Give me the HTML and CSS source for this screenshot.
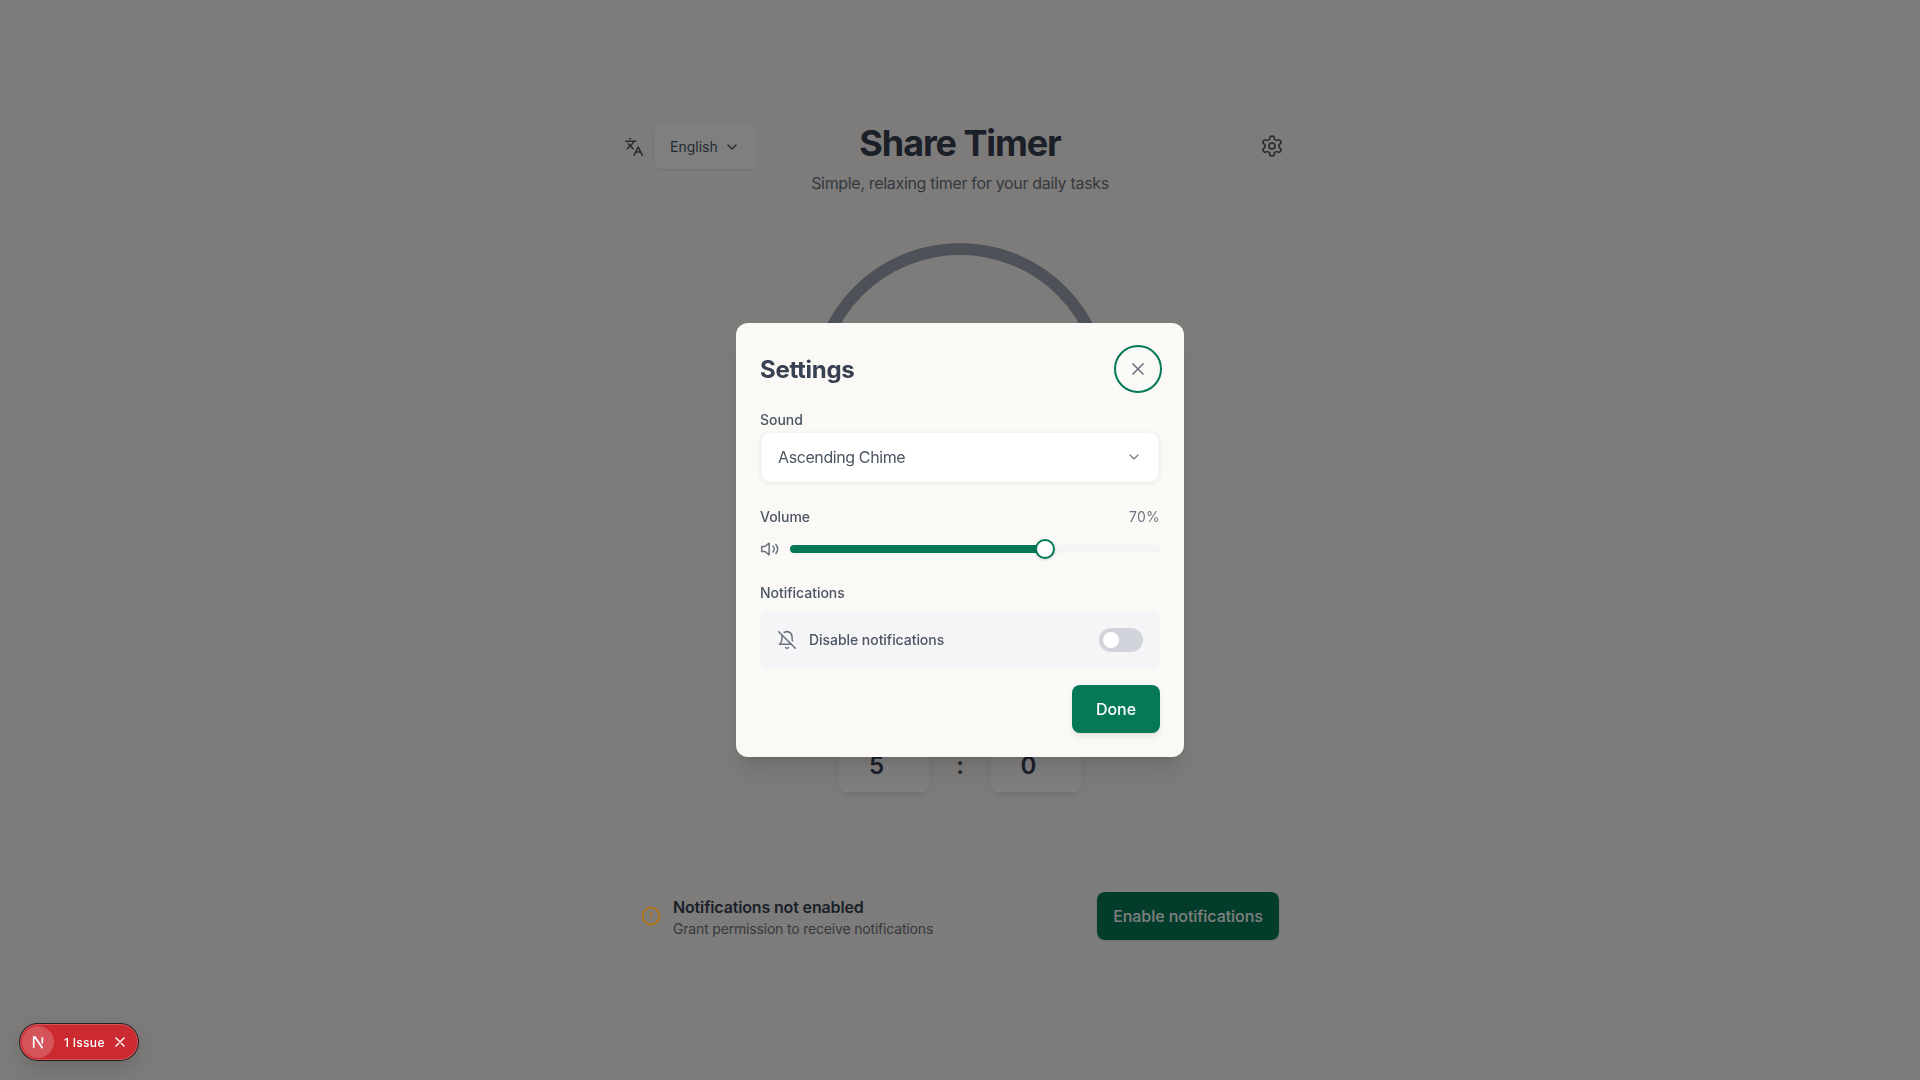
FILE: index.html
```html
<!DOCTYPE html>
<html lang="en">
<head>
<meta charset="utf-8">
<title>Share Timer</title>
<link rel="stylesheet" href="styles.css">
</head>
<body>
<main class="page">
  <header class="top">
    <div class="lang">
      <svg class="icon20 lang-icon" viewBox="0 0 24 24"><path d="m5 8 6 6"/><path d="m4 14 6-6 2-3"/><path d="M2 5h12"/><path d="M7 2h1"/><path d="m22 22-5-10-5 10"/><path d="M14 18h6"/></svg>
      <div class="lang-select"><span>English</span><svg class="icon16" viewBox="0 0 24 24"><path d="m6 9 6 6 6-6"/></svg></div>
    </div>
    <div class="brand">
      <h1>Share Timer</h1>
      <p>Simple, relaxing timer for your daily tasks</p>
    </div>
    <div class="gear-wrap">
      <svg class="gear" viewBox="0 0 24 24"><path d="M12.22 2h-.44a2 2 0 0 0-2 2v.18a2 2 0 0 1-1 1.73l-.43.25a2 2 0 0 1-2 0l-.15-.08a2 2 0 0 0-2.73.73l-.22.38a2 2 0 0 0 .73 2.73l.15.1a2 2 0 0 1 1 1.72v.51a2 2 0 0 1-1 1.74l-.15.09a2 2 0 0 0-.73 2.73l.22.38a2 2 0 0 0 2.73.73l.15-.08a2 2 0 0 1 2 0l.43.25a2 2 0 0 1 1 1.73V20a2 2 0 0 0 2 2h.44a2 2 0 0 0 2-2v-.18a2 2 0 0 1 1-1.73l.43-.25a2 2 0 0 1 2 0l.15.08a2 2 0 0 0 2.73-.73l.22-.39a2 2 0 0 0-.73-2.73l-.15-.08a2 2 0 0 1-1-1.74v-.5a2 2 0 0 1 1-1.74l.15-.09a2 2 0 0 0 .73-2.73l-.22-.38a2 2 0 0 0-2.73-.73l-.15.08a2 2 0 0 1-2 0l-.43-.25a2 2 0 0 1-1-1.73V4a2 2 0 0 0-2-2z"/><circle cx="12" cy="12" r="3"/></svg>
    </div>
  </header>

  <div class="ring"></div>

  <div class="time">
    <div class="time-card">5</div>
    <div class="colon">:</div>
    <div class="time-card">0</div>
  </div>

  <section class="notice">
    <div class="notice-text">
      <svg class="icon20 alert" viewBox="0 0 24 24"><circle cx="12" cy="12" r="10"/><path d="M12 8v4"/><path d="M12 16h.01"/></svg>
      <div class="notice-copy">
        <div class="notice-title">Notifications not enabled</div>
        <div class="notice-sub">Grant permission to receive notifications</div>
      </div>
    </div>
    <button class="enable">Enable notifications</button>
  </section>
</main>

<div class="overlay">
  <div class="modal">
    <div class="modal-head">
      <h2>Settings</h2>
      <button class="close" aria-label="Close"><svg class="icon20" viewBox="0 0 24 24"><path d="M18 6 6 18"/><path d="m6 6 12 12"/></svg></button>
    </div>

    <div class="label sound-label">Sound</div>
    <div class="select"><span>Ascending Chime</span><svg class="icon16" viewBox="0 0 24 24"><path d="m6 9 6 6 6-6"/></svg></div>

    <div class="label-row"><span class="label">Volume</span><span class="pct">70%</span></div>
    <div class="slider-row">
      <svg class="icon20 vol" viewBox="0 0 24 24"><path d="M11 5 6 9H2v6h4l5 4V5z"/><path d="M15.54 8.46a5 5 0 0 1 0 7.07"/><path d="M19.07 6.5a9 9 0 0 1 0 11"/></svg>
      <div class="track">
        <div class="fill" style="width:69%"></div>
        <div class="thumb" style="left:69%"></div>
      </div>
    </div>

    <div class="label notif-label">Notifications</div>
    <div class="notif-box">
      <svg class="icon20 bell" viewBox="0 0 24 24"><path d="M8.7 3A6 6 0 0 1 18 8a21.3 21.3 0 0 0 .6 5"/><path d="M17 17H3s3-2 3-9a4.67 4.67 0 0 1 .3-1.7"/><path d="M10.3 21a1.94 1.94 0 0 0 3.4 0"/><path d="m2 2 20 20"/></svg>
      <span class="notif-text">Disable notifications</span>
      <span class="toggle"><span class="knob"></span></span>
    </div>

    <div class="actions"><button class="done">Done</button></div>
  </div>
</div>

<div class="issue">
  <span class="issue-logo"><svg viewBox="0 0 16 16" class="n-logo"><path d="M3.5 13V3h1.3l7 10.4" class="n-stroke"/><path d="M11.6 3v6" class="n-stroke"/></svg></span>
  <span class="issue-text">1 Issue</span>
  <svg class="issue-x" viewBox="0 0 14 14"><path d="M3 3l8 8M11 3l-8 8"/></svg>
</div>
</body>
</html>
```
FILE: styles.css
```css
* { box-sizing: border-box; }
html, body { margin: 0; height: 1080px; overflow: hidden; }
body { background: #faf9f6; font-family: Inter, "Liberation Sans", sans-serif; color: #374151; }
svg { fill: none; stroke: currentColor; stroke-width: 2; stroke-linecap: round; stroke-linejoin: round; display: block; flex: none; }
.icon20 { width: 20px; height: 20px; }
.icon16 { width: 16px; height: 16px; }
button { font-family: inherit; border: 0; cursor: pointer; }

.page { width: 672px; margin: 0 auto; padding-top: 123px; }
.top { display: grid; grid-template-columns: 1fr auto 1fr; align-items: start; }
.lang { display: flex; align-items: center; gap: 10px; margin-top: 1px; }
.lang-icon { color: #4b5563; stroke-width: 1.8; }
.lang-select { display: flex; align-items: center; justify-content: space-between; width: 103px; height: 45px; padding: 0 17px 0 16px; background: #fff; border-radius: 6px; font-size: 14px; color: #4b5563; box-shadow: 0 1px 3px rgba(0,0,0,.1); }
.brand { text-align: center; }
h1 { margin: 0; font-size: 36px; line-height: 40px; font-weight: 700; letter-spacing: -1.1px; color: #374151; }
.brand p { margin: 8px 0 0; font-size: 16px; line-height: 24px; letter-spacing: -0.32px; color: #6b7280; }
.gear-wrap { justify-self: end; padding: 11px 12px 0 0; color: #4b5563; }
.gear { width: 24px; height: 24px; stroke-width: 1.6; }

.ring { width: 300px; height: 300px; margin: 48px auto 0; border: 12px solid #9ca3af; border-radius: 50%; }

.time { width: 244px; margin: 195px auto 0; display: grid; grid-template-columns: 92px 1fr 92px; align-items: center; }
.time-card { height: 54px; display: flex; align-items: center; justify-content: center; padding-right: 15px; background: #fff; border-radius: 8px; font-size: 24px; font-weight: 600; color: #374151; box-shadow: 0 4px 6px -1px rgba(0,0,0,.1); }
.colon { text-align: center; font-size: 24px; font-weight: 600; color: #4b5563; }

.notice { margin-top: 83px; height: 82px; padding: 16px; display: flex; align-items: center; justify-content: space-between; background: #faf9f6; border: 1px solid #f3f3f1; border-radius: 12px; }
.notice-text { display: flex; align-items: center; gap: 12px; }
.notice-copy { padding-top: 1px; }
.alert { color: #b8770f; position: relative; z-index: 60; }
.notice-title { font-size: 16px; line-height: 24px; font-weight: 600; letter-spacing: -0.15px; color: #374151; }
.notice-sub { font-size: 14px; line-height: 20px; letter-spacing: -0.18px; color: #6b7280; }
.enable { width: 182px; height: 48px; background: #047857; color: #fff; border-radius: 8px; font-size: 16px; font-weight: 500; letter-spacing: -0.05px; box-shadow: 0 1px 3px rgba(0,0,0,.1); }

.overlay { position: fixed; inset: 0; z-index: 50; display: flex; align-items: center; justify-content: center; background: rgba(0,0,0,.5); backdrop-filter: blur(.7px); }
.modal { width: 448px; height: 434px; padding: 24px; background: #faf9f6; border-radius: 12px; box-shadow: 0 20px 25px -5px rgba(0,0,0,.1), 0 8px 10px -6px rgba(0,0,0,.1); }
.modal-head { display: flex; align-items: center; justify-content: space-between; height: 44px; }
h2 { margin: 0; padding-top: 1px; font-size: 24px; line-height: 32px; font-weight: 700; letter-spacing: -0.3px; color: #374151; }
.close { width: 44px; height: 44px; display: flex; align-items: center; justify-content: center; background: transparent; border-radius: 50%; color: #6b7280; outline: 2px solid #047857; }
.label { font-size: 14px; line-height: 20px; font-weight: 500; letter-spacing: -0.03px; color: #4b5563; }
.sound-label { margin-top: 19px; }
.select { margin-top: 1px; height: 52px; padding: 0 16px; display: flex; align-items: center; justify-content: space-between; background: #fff; border: 2px solid #f5f5f3; border-radius: 10px; font-size: 16px; letter-spacing: -0.4px; color: #4b5563; box-shadow: 0 1px 3px rgba(0,0,0,.08); }
.select svg { color: #6b7280; stroke-width: 1.7; }
.label-row { margin-top: 24px; display: flex; justify-content: space-between; align-items: center; }
.pct { font-size: 14px; line-height: 20px; letter-spacing: .25px; color: #6b7280; }
.slider-row { margin-top: 12px; height: 20px; display: flex; align-items: center; gap: 10px; }
.vol { color: #6b7280; stroke-width: 1.8; }
.track { position: relative; flex: 1; height: 8px; background: #f3f4f6; border-radius: 4px; }
.fill { height: 8px; background: #047857; border-radius: 4px; }
.thumb { position: absolute; top: -6px; width: 20px; height: 20px; margin-left: -10px; background: #fff; border: 2px solid #047857; border-radius: 50%; box-shadow: 0 1px 3px rgba(0,0,0,.15); }
.notif-label { margin-top: 24px; }
.notif-box { margin-top: 8px; height: 58px; padding: 16px; display: flex; align-items: center; gap: 12px; background: #f5f5f7; border: 1px solid #f3f4f6; border-radius: 10px; }
.bell { color: #6b7280; stroke-width: 1.8; }
.notif-text { flex: 1; padding-bottom: 1px; font-size: 14px; font-weight: 500; letter-spacing: -0.05px; color: #4b5563; }
.toggle { width: 44px; height: 24px; padding: 4px; background: #d1d5db; border-radius: 12px; }
.knob { display: block; width: 16px; height: 16px; background: #fff; border-radius: 50%; }
.actions { margin-top: 16px; display: flex; justify-content: flex-end; }
.done { width: 88px; height: 48px; background: #047857; color: #fff; border-radius: 8px; font-size: 16px; font-weight: 500; box-shadow: 0 4px 6px -1px rgba(0,0,0,.1); }

.issue { position: fixed; left: 20px; bottom: 20px; z-index: 70; width: 118px; height: 36px; padding: 2px; display: flex; align-items: center; background: #ca2a30; border-radius: 18px; box-shadow: 0 0 0 1px #1f1f1f, inset 0 0 0 1px rgba(255,255,255,.2), 0 8px 24px rgba(0,0,0,.15); color: #fff; }
.issue-logo { width: 32px; height: 32px; display: flex; align-items: center; justify-content: center; background: rgba(255,255,255,.2); border-radius: 50%; }
.n-logo { width: 17px; height: 17px; }
.n-stroke { stroke: #fff; stroke-width: 1.6; stroke-linecap: butt; stroke-linejoin: miter; }
.issue-text { margin-left: 10px; font-size: 12px; font-weight: 500; letter-spacing: .3px; }
.issue-x { margin-left: 8px; width: 14px; height: 14px; stroke-width: 1.4; }
```
